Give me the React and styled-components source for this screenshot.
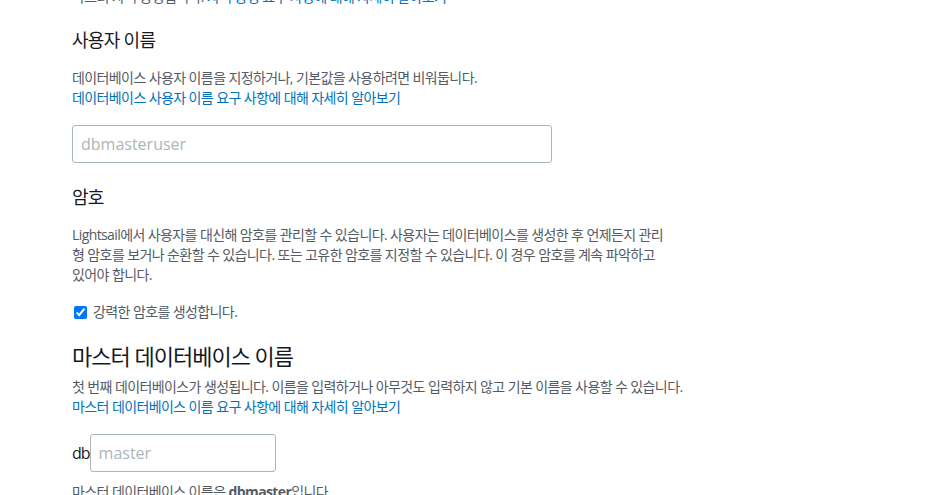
import styled, { createGlobalStyle } from 'styled-components'

const GlobalStyle = createGlobalStyle`
	body {
		margin: 0;
		background: #ffffff;
		font-family: "Open Sans", "Noto Sans CJK KR", sans-serif;
		color: #16191f;
	}
`

export default function App() {
	return (
		<>
			<GlobalStyle />
			<Page>
				<Hint>
					마스터 자격 증명입니다. <Link href="#">자격 증명 요구 사항에 대해 자세히 알아보기</Link>
				</Hint>

				<Field $top={20}>
					<Heading>사용자 이름</Heading>
					<Description>
						데이터베이스 사용자 이름을 지정하거나, 기본값을 사용하려면 비워둡니다.
						<br />
						<Link href="#">데이터베이스 사용자 이름 요구 사항에 대해 자세히 알아보기</Link>
					</Description>
					<TextInput $width={480} placeholder="dbmasteruser" />
				</Field>

				<Field $top={21}>
					<Heading>암호</Heading>
					<Description>
						Lightsail에서 사용자를 대신해 암호를 관리할 수 있습니다. 사용자는 데이터베이스를 생성한 후 언제든지 관리형 암호를 보거나 순환할 수 있습니다. 또는 고유한 암호를 지정할 수 있습니다. 이 경우 암호를 계속 파악하고 있어야 합니다.
					</Description>
					<CheckRow>
						<input type="checkbox" defaultChecked />
						<span>강력한 암호를 생성합니다.</span>
					</CheckRow>
				</Field>

				<Field $top={19}>
					<Title>마스터 데이터베이스 이름</Title>
					<Description $top={6} $wide>
						첫 번째 데이터베이스가 생성됩니다. 이름을 입력하거나 아무것도 입력하지 않고 기본 이름을 사용할 수 있습니다.
						<br />
						<Link href="#">마스터 데이터베이스 이름 요구 사항에 대해 자세히 알아보기</Link>
					</Description>
					<PrefixRow>
						<Prefix>db</Prefix>
						<TextInput $width={186} placeholder="master" />
					</PrefixRow>
					<Note>
						마스터 데이터베이스 이름은 <b>dbmaster</b>입니다.
					</Note>
				</Field>
			</Page>
		</>
	)
}

const Page = styled.div`
	margin-top: -13px;
	padding-left: 72px;
	width: 597px;
	display: flex;
	flex-direction: column;
`
const Hint = styled.p`
	margin: 0;
	font-size: 14px;
	line-height: 20px;
	letter-spacing: -0.6px;
	color: #545b64;
	white-space: nowrap;
`
const Link = styled.a`
	color: #0073bb;
	text-decoration: none;
`
const Field = styled.section`
	margin-top: ${(p) => p.$top}px;
	display: flex;
	flex-direction: column;
	align-items: flex-start;
`
const Heading = styled.h3`
	margin: 0;
	font-size: 18px;
	line-height: 26px;
	letter-spacing: -0.7px;
	font-weight: 400;
	color: #16191f;
`
const Title = styled.h2`
	margin: 0;
	font-size: 22px;
	line-height: 30px;
	letter-spacing: -1px;
	font-weight: 400;
	color: #16191f;
`
const Description = styled.p`
	margin: ${(p) => p.$top ?? 15}px 0 0;
	width: ${(p) => (p.$wide ? '640px' : 'auto')};
	font-size: 14px;
	line-height: 20px;
	letter-spacing: -0.6px;
	color: #545b64;
`
const TextInput = styled.input`
	box-sizing: border-box;
	margin-top: 17px;
	width: ${(p) => p.$width}px;
	height: 38px;
	padding: 0 8px;
	border: 1px solid #aab7b8;
	border-radius: 3px;
	font-family: "Open Sans", "Noto Sans CJK KR", sans-serif;
	font-size: 16px;
	color: #16191f;
	&::placeholder {
		color: #aab7b8;
	}
`
const CheckRow = styled.label`
	margin-top: 17px;
	display: flex;
	align-items: center;
	gap: 6px;
	font-size: 14px;
	line-height: 20px;
	letter-spacing: -0.6px;
	color: #545b64;
	input {
		margin: 0 0 0 2px;
		width: 13px;
		height: 13px;
	}
`
const PrefixRow = styled.div`
	display: flex;
	align-items: flex-end;
	input {
		margin-top: 17px;
	}
`
const Prefix = styled.span`
	font-size: 16px;
	line-height: 38px;
	letter-spacing: -1px;
	font-weight: 500;
	color: #16191f;
`
const Note = styled.p`
	margin: 10px 0 0;
	font-size: 14px;
	line-height: 20px;
	letter-spacing: -0.6px;
	color: #545b64;
`
